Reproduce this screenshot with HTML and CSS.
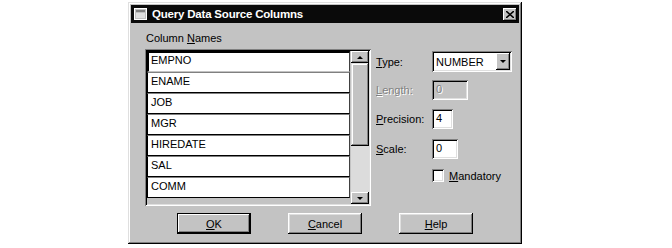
FILE: index.html
```html
<!DOCTYPE html>
<html lang="en">
<head>
    <meta charset="UTF-8">
    <title>Query Data Source Columns</title>
    <link rel="stylesheet" href="styles.css">
</head>
<body>
    <div class="dialog">
        <div class="titlebar">
            <svg class="title-icon" width="13" height="12" viewBox="0 0 13 12">
                <rect x="0.5" y="0.5" width="12" height="11" fill="#c0c0c0" stroke="#fff"/>
                <rect x="2" y="2" width="9" height="2" fill="#808080"/>
                <rect x="2" y="5" width="9" height="5" fill="#dfdfdf"/>
            </svg>
            <span class="title-text">Query Data Source Columns</span>
            <button class="close-btn">
                <svg width="8" height="7" viewBox="0 0 8 7">
                    <path d="M0 0 L8 7 M8 0 L0 7" stroke="#000" stroke-width="1.6"/>
                </svg>
            </button>
        </div>

        <div class="content">
            <div class="left-col">
                <div class="label">Column <u>N</u>ames</div>
                <div class="list">
                    <div class="rows">
                        <div class="row focused">EMPNO</div>
                        <div class="row">ENAME</div>
                        <div class="row">JOB</div>
                        <div class="row">MGR</div>
                        <div class="row">HIREDATE</div>
                        <div class="row">SAL</div>
                        <div class="row">COMM</div>
                    </div>
                    <div class="scrollbar">
                        <div class="sb-btn"><span class="arrow up"></span></div>
                        <div class="sb-thumb"></div>
                        <div class="sb-track"></div>
                        <div class="sb-btn"><span class="arrow down"></span></div>
                    </div>
                </div>
            </div>

            <div class="right-col">
                <div class="field-row type-row">
                    <span class="field-label"><u>T</u>ype:</span>
                    <div class="combo">
                        <span class="combo-text">NUMBER</span>
                        <div class="combo-btn"><span class="arrow down"></span></div>
                    </div>
                </div>
                <div class="field-row length-row">
                    <span class="field-label disabled"><u>L</u>ength:</span>
                    <div class="textbox disabled w-36">0</div>
                </div>
                <div class="field-row precision-row">
                    <span class="field-label"><u>P</u>recision:</span>
                    <div class="textbox w-21">4</div>
                </div>
                <div class="field-row scale-row">
                    <span class="field-label"><u>S</u>cale:</span>
                    <div class="textbox w-26">0</div>
                </div>
                <div class="field-row check-row">
                    <span class="checkbox"></span>
                    <span class="check-label"><u>M</u>andatory</span>
                </div>
            </div>
        </div>

        <div class="buttons">
            <button class="btn default"><u>O</u>K</button>
            <button class="btn"><u>C</u>ancel</button>
            <button class="btn"><u>H</u>elp</button>
        </div>
    </div>
</body>
</html>
```

FILE: styles.css
```css
body {
    margin: 0;
    background: #fff;
    font-family: "Liberation Sans", Arial, sans-serif;
    font-size: 11px;
    color: #000;
}

.dialog {
    box-sizing: border-box;
    width: 394px;
    height: 242px;
    margin: 2px 0 0 128px;
    padding: 3px;
    background: #c3c3c3;
    box-shadow: inset -1px -1px #000, inset 1px 1px #dfdfdf,
                inset -2px -2px #808080, inset 2px 2px #fff;
}

.titlebar {
    display: flex;
    align-items: center;
    height: 18px;
    padding: 0 2px 0 3px;
    background: #0a0a0a;
    color: #fff;
}

.title-icon {
    margin-right: 5px;
}

.title-text {
    flex: 1;
    font-weight: bold;
    font-size: 11.5px;
    letter-spacing: -0.2px;
}

.close-btn {
    box-sizing: border-box;
    width: 14px;
    height: 13px;
    padding: 0;
    border: none;
    display: flex;
    align-items: center;
    justify-content: center;
    background: #c3c3c3;
    box-shadow: inset -1px -1px #000, inset 1px 1px #fff, inset -2px -2px #808080;
}

.content {
    display: flex;
    padding: 9px 0 0 14px;
}

.left-col {
    width: 226px;
}

.label {
    height: 13px;
    line-height: 13px;
    margin-bottom: 4px;
    margin-left: 1px;
}

.list {
    box-sizing: border-box;
    display: flex;
    height: 157px;
    padding: 2px;
    background: #c3c3c3;
    box-shadow: inset 1px 1px #808080, inset -1px -1px #fff,
                inset 2px 2px #000, inset -2px -2px #dfdfdf;
}

.rows {
    flex: 1;
}

.row {
    box-sizing: border-box;
    height: 21px;
    line-height: 16px;
    padding-left: 3px;
    background: #fff;
    border-top: 1px solid #808080;
    border-left: 1px solid #000;
    border-right: 1px solid #404040;
    border-bottom: 1px solid #000;
}

.row.focused {
    border-top: 2px solid #000;
    border-left: 2px solid #000;
    border-bottom: 1px solid #c3c3c3;
    padding-left: 2px;
    line-height: 15px;
}

.scrollbar {
    display: flex;
    flex-direction: column;
    width: 18px;
    margin-left: 1px;
}

.sb-btn {
    box-sizing: border-box;
    height: 12px;
    display: flex;
    align-items: center;
    justify-content: center;
    background: #c3c3c3;
    box-shadow: inset -1px -1px #000, inset 1px 1px #fff, inset -2px -2px #808080;
}

.sb-thumb {
    height: 83px;
    background: #c3c3c3;
    box-shadow: inset -1px -1px #000, inset 1px 1px #dfdfdf,
                inset -2px -2px #808080, inset 2px 2px #fff;
}

.sb-track {
    flex: 1;
    background: #dcdcdc;
}

.arrow {
    width: 0;
    height: 0;
    border-left: 3px solid transparent;
    border-right: 3px solid transparent;
}

.arrow.up {
    border-bottom: 3px solid #000;
}

.arrow.down {
    border-top: 3px solid #000;
}

.right-col {
    margin-left: 5px;
    padding-top: 19px;
}

.field-row {
    display: flex;
    align-items: center;
}

.field-label {
    width: 56px;
}

.field-label.disabled {
    color: #808080;
    text-shadow: 1px 1px #fff;
}

.type-row {
    height: 21px;
}

.length-row {
    height: 20px;
    margin-top: 8px;
}

.precision-row {
    height: 20px;
    margin-top: 9px;
}

.scale-row {
    height: 20px;
    margin-top: 10px;
}

.check-row {
    height: 13px;
    margin-top: 10px;
    padding-left: 56px;
}

.combo {
    box-sizing: border-box;
    display: flex;
    align-items: center;
    width: 80px;
    height: 21px;
    padding: 2px;
    background: #fff;
    box-shadow: inset 1px 1px #808080, inset -1px -1px #fff,
                inset 2px 2px #000, inset -2px -2px #dfdfdf;
}

.combo-text {
    flex: 1;
    padding-left: 2px;
}

.combo-btn {
    box-sizing: border-box;
    width: 14px;
    height: 17px;
    display: flex;
    align-items: center;
    justify-content: center;
    background: #c3c3c3;
    box-shadow: inset -1px -1px #000, inset 1px 1px #fff, inset -2px -2px #808080;
}

.textbox {
    box-sizing: border-box;
    height: 20px;
    line-height: 15px;
    padding: 2px 0 0 4px;
    background: #fff;
    box-shadow: inset 1px 1px #808080, inset -1px -1px #fff,
                inset 2px 2px #000, inset -2px -2px #dfdfdf;
}

.textbox.disabled {
    background: #c3c3c3;
    color: #808080;
    text-shadow: 1px 1px #fff;
}

.w-36 { width: 36px; }
.w-21 { width: 21px; }
.w-26 { width: 26px; }

.checkbox {
    box-sizing: border-box;
    width: 12px;
    height: 13px;
    background: #fff;
    box-shadow: inset 1px 1px #808080, inset -1px -1px #fff,
                inset 2px 2px #000, inset -2px -2px #dfdfdf;
}

.check-label {
    margin-left: 5px;
}

.buttons {
    display: flex;
    gap: 37px;
    padding: 7px 0 0 46px;
}

.btn {
    box-sizing: border-box;
    width: 74px;
    height: 21px;
    padding: 0;
    border: none;
    font-family: "Liberation Sans", Arial, sans-serif;
    font-size: 11px;
    color: #000;
    background: #c3c3c3;
    box-shadow: inset -1px -1px #000, inset 1px 1px #fff,
                inset -2px -2px #808080, inset 2px 2px #dfdfdf;
}

.btn.default {
    box-shadow: inset 0 0 0 1px #000, inset -2px -2px #000, inset 2px 2px #fff,
                inset -3px -3px #808080;
}
```
